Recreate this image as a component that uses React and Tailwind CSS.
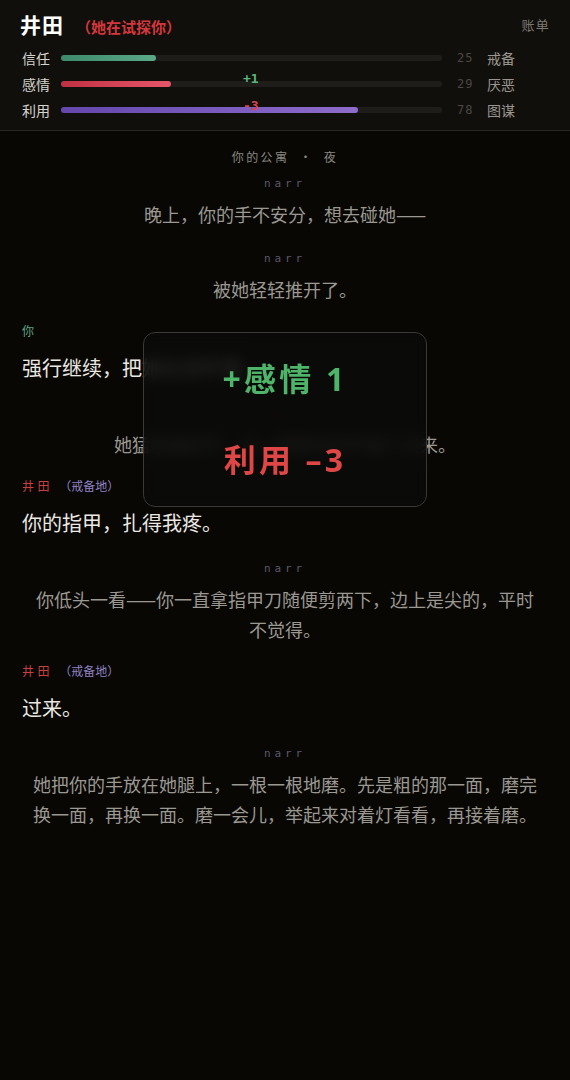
const FONT = { fontFamily: '"Noto Sans CJK SC", "Noto Sans", sans-serif' };
const TOAST = { fontFamily: '"Noto Sans", "Noto Sans CJK SC", sans-serif' };
const MONO = { fontFamily: '"DejaVu Sans Mono", "Liberation Mono", "Noto Sans CJK SC", monospace' };

const stats = [
  { label: '信任', value: 25, tag: '戒备', fill: 'bg-gradient-to-r from-[#3d8a6c] to-[#5aa987]' },
  { label: '感情', value: 29, tag: '厌恶', fill: 'bg-gradient-to-r from-[#c22f42] to-[#e4566a]' },
  { label: '利用', value: 78, tag: '图谋', fill: 'bg-gradient-to-r from-[#6547ad] to-[#8e6ccb]' },
];

const log = [
  { type: 'narr', text: '晚上，你的手不安分，想去碰她——' },
  { type: 'narr', text: '被她轻轻推开了。' },
  { type: 'you', text: '强行继续，把她拉进怀里。' },
  { type: 'narr', text: '她猛地抽回手，又一把把你的手拽了过来。' },
  { type: 'her', mood: '（戒备地）', text: '你的指甲，扎得我疼。' },
  { type: 'narr', text: '你低头一看——你一直拿指甲刀随便剪两下，边上是尖的，平时不觉得。' },
  { type: 'her', mood: '（戒备地）', text: '过来。' },
  { type: 'narr', text: '她把你的手放在她腿上，一根一根地磨。先是粗的那一面，磨完换一面，再换一面。磨一会儿，举起来对着灯看看，再接着磨。' },
];

function StatRow({ label, value, tag, fill }) {
  return (
    <div className="flex h-[26px] items-center pl-[2px]">
      <span className="w-[39px] text-[14px] text-[#d8d5cf]">{label}</span>
      <div className="h-[6px] w-[381px] rounded-full bg-[#1f1d1a]">
        <div className={`h-full rounded-full ${fill}`} style={{ width: `${value}%` }} />
      </div>
      <span className="ml-[15px] w-[30px] text-[12px] tracking-[0.08em] text-[#4b4843]" style={MONO}>
        {value}
      </span>
      <span className="text-[14px] text-[#9a968f]">{tag}</span>
    </div>
  );
}

function Entry({ item }) {
  if (item.type === 'narr') {
    return (
      <div className="mt-[20px] px-[10px] text-center">
        <div className="h-[20px] text-[11px] leading-[20px] tracking-[0.35em] text-[#5c586c]" style={MONO}>
          narr
        </div>
        <p className="mt-[5px] text-[18px] leading-[30px] text-[#9b9892]">{item.text}</p>
      </div>
    );
  }
  const isYou = item.type === 'you';
  return (
    <div className="mt-[18px]">
      <div className="flex h-[18px] items-center text-[12px] leading-[18px]">
        {isYou ? (
          <span className="text-[#5fa585]">你</span>
        ) : (
          <>
            <span className="tracking-[0.3em] text-[#c8403f]">井田</span>
            <span className="ml-[6px] text-[#8f82c2]">{item.mood}</span>
          </>
        )}
      </div>
      <p className="mt-[12px] text-[20px] leading-[32px] text-[#ebe8e3]">{item.text}</p>
    </div>
  );
}

export default function App() {
  return (
    <div className="relative min-h-[1080px] w-full bg-[#080704]" style={FONT}>
      {/* Status header */}
      <header className="relative border-b border-[#2a2723] bg-[#110f0c] px-5 pb-[7px] pt-[10px]">
        <div className="flex h-[30px] items-center justify-between">
          <div className="flex items-baseline">
            <span className="text-[21px] font-bold tracking-[0.05em] text-white">井田</span>
            <span className="ml-[12px] text-[15px] font-bold text-[#d4373b]">（她在试探你）</span>
          </div>
          <span className="text-[13px] tracking-[0.1em] text-[#7b776f]">账单</span>
        </div>
        <div className="mt-[5px]">
          {stats.map((s) => (
            <StatRow key={s.label} {...s} />
          ))}
        </div>
        {/* floating deltas */}
        <span className="absolute left-[243px] top-[69px] text-[13px] font-bold text-[#5cb578]" style={MONO}>
          +1
        </span>
        <span className="absolute left-[243px] top-[96px] text-[13px] font-bold text-[#d6444a]" style={MONO}>
          -3
        </span>
      </header>

      {/* Story log */}
      <main className="px-[22px] pb-10">
        <div className="mt-[17px] text-center text-[12px] leading-[18px] tracking-[0.2em] text-[#8a8781]">
          你的公寓<span className="mx-[10px]">·</span>夜
        </div>
        <div className="-mt-[12px]">
          {log.map((item, i) => (
            <Entry key={i} item={item} />
          ))}
        </div>
      </main>

      {/* Stat change toast */}
      <div
        className="absolute left-1/2 top-[332px] flex h-[175px] w-[284px] -translate-x-1/2 flex-col items-center justify-center gap-[41px] rounded-[12px] border border-[#3a3936] bg-[#0b0a09]/85 backdrop-blur-[7px]"
        style={TOAST}
      >
        <div className="text-[32px] font-bold leading-[40px] tracking-[0.1em] text-[#4db46a]">+感情 1</div>
        <div className="text-[32px] font-bold leading-[40px] tracking-[0.1em] text-[#df4747]">利用 –3</div>
      </div>
    </div>
  );
}
